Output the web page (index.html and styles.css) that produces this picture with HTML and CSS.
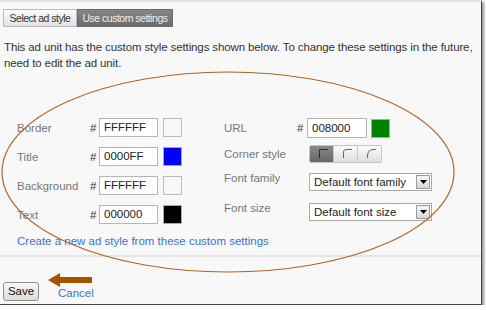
FILE: index.html
```html
<!DOCTYPE html>
<html>
<head>
<meta charset="utf-8">
<link rel="stylesheet" href="styles.css">
</head>
<body>
<div class="page">
  <div class="tabs">
    <div class="tab first">Select ad style</div>
    <div class="tab active">Use custom settings</div>
  </div>
  <p class="intro">This ad unit has the custom style settings shown below. To change these settings in the future,<br>need to edit the ad unit.</p>

  <div class="form">
    <div class="col left">
      <div class="row"><span class="lbl">Border</span><span class="hash">#</span><span class="inp">FFFFFF</span><span class="sw white"></span></div>
      <div class="row"><span class="lbl">Title</span><span class="hash">#</span><span class="inp">0000FF</span><span class="sw blue"></span></div>
      <div class="row"><span class="lbl">Background</span><span class="hash">#</span><span class="inp">FFFFFF</span><span class="sw white"></span></div>
      <div class="row"><span class="lbl">Text</span><span class="hash">#</span><span class="inp">000000</span><span class="sw black"></span></div>
    </div>
    <div class="col right">
      <div class="row r1"><span class="lbl">URL</span><span class="hash">#</span><span class="inp">008000</span><span class="sw green"></span></div>
      <div class="row r2"><span class="lbl">Corner style</span>
        <div class="corners">
          <span class="cbtn on"><svg width="10" height="10" viewBox="0 0 10 10"><path d="M1.5 10V1.5H10" fill="none" stroke="#2a2a2a" stroke-width="1"/></svg></span>
          <span class="cbtn"><svg width="10" height="10" viewBox="0 0 10 10"><path d="M1.5 10V4Q1.5 1.5 4 1.5H10" fill="none" stroke="#666" stroke-width="1"/></svg></span>
          <span class="cbtn"><svg width="10" height="10" viewBox="0 0 10 10"><path d="M1.5 10V8Q1.5 1.5 8 1.5H10" fill="none" stroke="#666" stroke-width="1"/></svg></span>
        </div>
      </div>
      <div class="row r3"><span class="lbl">Font family</span><div class="sel"><span class="seltxt">Default font family</span><span class="arr"><svg width="7" height="4" viewBox="0 0 7 4"><path d="M0 0H7L3.5 4Z" fill="#000"/></svg></span></div></div>
      <div class="row r4"><span class="lbl">Font size</span><div class="sel"><span class="seltxt">Default font size</span><span class="arr"><svg width="7" height="4" viewBox="0 0 7 4"><path d="M0 0H7L3.5 4Z" fill="#000"/></svg></span></div></div>
    </div>
  </div>
  <a class="link create">Create a new ad style from these custom settings</a>
  <div class="sep"></div>
  <div class="actions">
    <span class="btn">Save</span>
    <a class="link cancel">Cancel</a>
  </div>

  <svg class="overlay" width="482" height="305" viewBox="0 0 482 305">
    <ellipse cx="228" cy="172" rx="226" ry="100" fill="none" stroke="#b0661e" stroke-width="1.2"/>
    <polygon points="48,280 60,273 60,277 92,277 92,283 60,283 60,287" fill="#a65300"/>
  </svg>
</div>
</body>
</html>
```
FILE: styles.css
```css
html { background: #fff; }
body {
  margin: 0;
  font-family: "Liberation Sans", Arial, sans-serif;
  font-size: 11px;
  color: #333;
}
.page {
  position: relative;
  width: 481px;
  height: 302px;
  background: #f8f8f8;
  border-top: 2px solid #e2e2e2;
  border-right: 1px solid #444;
  border-bottom: 1px solid #444;
  box-shadow: 2px 2px 3px rgba(0,0,0,0.45);
  overflow: hidden;
}
.tabs {
  display: flex;
  margin: 7px 0 0 3px;
  height: 18px;
}
.tab {
  box-sizing: border-box;
  height: 18px;
  line-height: 16px;
  text-align: center;
  white-space: nowrap;
  border: 1px solid #bbb;
  background: linear-gradient(#fbfbfb, #e2e2e2);
  color: #333;
  font-size: 10.5px;
  letter-spacing: -0.5px;
}
.tab.first { width: 74px; }
.tab.active {
  width: 96px;
  background: linear-gradient(#858585, #6c6c6c);
  border-color: #6a6a6a;
  color: #eee;
}
.intro {
  margin: 12px 0 0 4px;
  white-space: nowrap;
  line-height: 16px;
  font-size: 11.5px;
  letter-spacing: -0.12px;
  color: #333;
}
.form {
  display: flex;
  margin-top: 47px;
}
.col { display: flex; flex-direction: column; }
.left { padding-left: 17px; width: 166px; gap: 10px; }
.right { padding-left: 41px; }
.row { display: flex; align-items: center; height: 19px; }
.lbl { color: #777; font-size: 11.5px; }
.left .lbl { width: 73px; }
.right .lbl { width: 73px; }
.hash { width: 9px; color: #333; font-size: 11.5px; }
.inp {
  box-sizing: border-box;
  width: 59px;
  height: 19px;
  line-height: 17px;
  border: 1px solid #b5b5b5;
  background: #fff;
  padding-left: 4px;
  color: #222;
  font-size: 11.5px;
}
.right .hash { width: 10px; }
.right .inp { width: 60px; height: 20px; line-height: 18px; }
.sw {
  box-sizing: border-box;
  width: 19px;
  height: 19px;
  margin-left: 5px;
  border: 1px solid #aaa;
}
.right .sw { margin-left: 4px; }
.sw.white { background: #f7f7f7; border-color: #bcbcbc; }
.sw.blue { background: #0000ff; }
.sw.black { background: #000; }
.sw.green { background: #008000; }
.r1 { height: 20px; }
.r2 { margin-top: 7px; height: 18px; }
.r2 .lbl { width: 85px; }
.corners {
  display: flex;
  height: 18px;
  border: 1px solid #c4c4c4;
  border-radius: 2px;
  box-sizing: border-box;
  width: 73px;
  overflow: hidden;
}
.cbtn {
  flex: 1;
  display: flex;
  align-items: center;
  justify-content: center;
  background: linear-gradient(#fdfdfd, #dedede);
  border-left: 1px solid #c8c8c8;
  padding-bottom: 2px;
  padding-left: 2px;
}
.cbtn:first-child { border-left: 0; }
.cbtn.on { background: linear-gradient(#8a8a8a, #676767); }
.r3 { margin-top: 10px; height: 18px; align-items: flex-start; }
.r4 { margin-top: 12px; height: 18px; align-items: flex-start; }
.r3 .lbl, .r4 .lbl { width: 85px; margin-top: -1px; }
.sel {
  box-sizing: border-box;
  width: 123px;
  height: 18px;
  border: 1px solid #a9a9a9;
  background: #fff;
  display: flex;
  align-items: center;
  justify-content: space-between;
  padding-left: 4px;
}
.seltxt { color: #222; font-size: 11.5px; }
.arr {
  box-sizing: border-box;
  width: 14px;
  height: 14px;
  margin-right: 1px;
  border: 1px solid #9a9a9a;
  background: linear-gradient(#f4f4f4, #d8d8d8);
  display: flex;
  align-items: center;
  justify-content: center;
}
.link { color: #3a72d0; font-size: 11.5px; }
.create { display: block; margin: 11px 0 0 17px; }
.sep {
  margin-top: 8px;
  height: 2px;
  background: #e6e6e6;
}
.actions {
  display: flex;
  align-items: center;
  margin: 25px 0 0 3px;
}
.btn {
  box-sizing: border-box;
  width: 36px;
  height: 19px;
  line-height: 17px;
  text-align: center;
  border: 1px solid #8f8f8f;
  border-radius: 3px;
  background: linear-gradient(#f8f8f8, #dcdcdc);
  color: #111;
  font-size: 11.5px;
}
.cancel { margin-left: 19px; margin-top: 2px; }
.overlay { position: absolute; left: 0; top: -2px; pointer-events: none; }
```
